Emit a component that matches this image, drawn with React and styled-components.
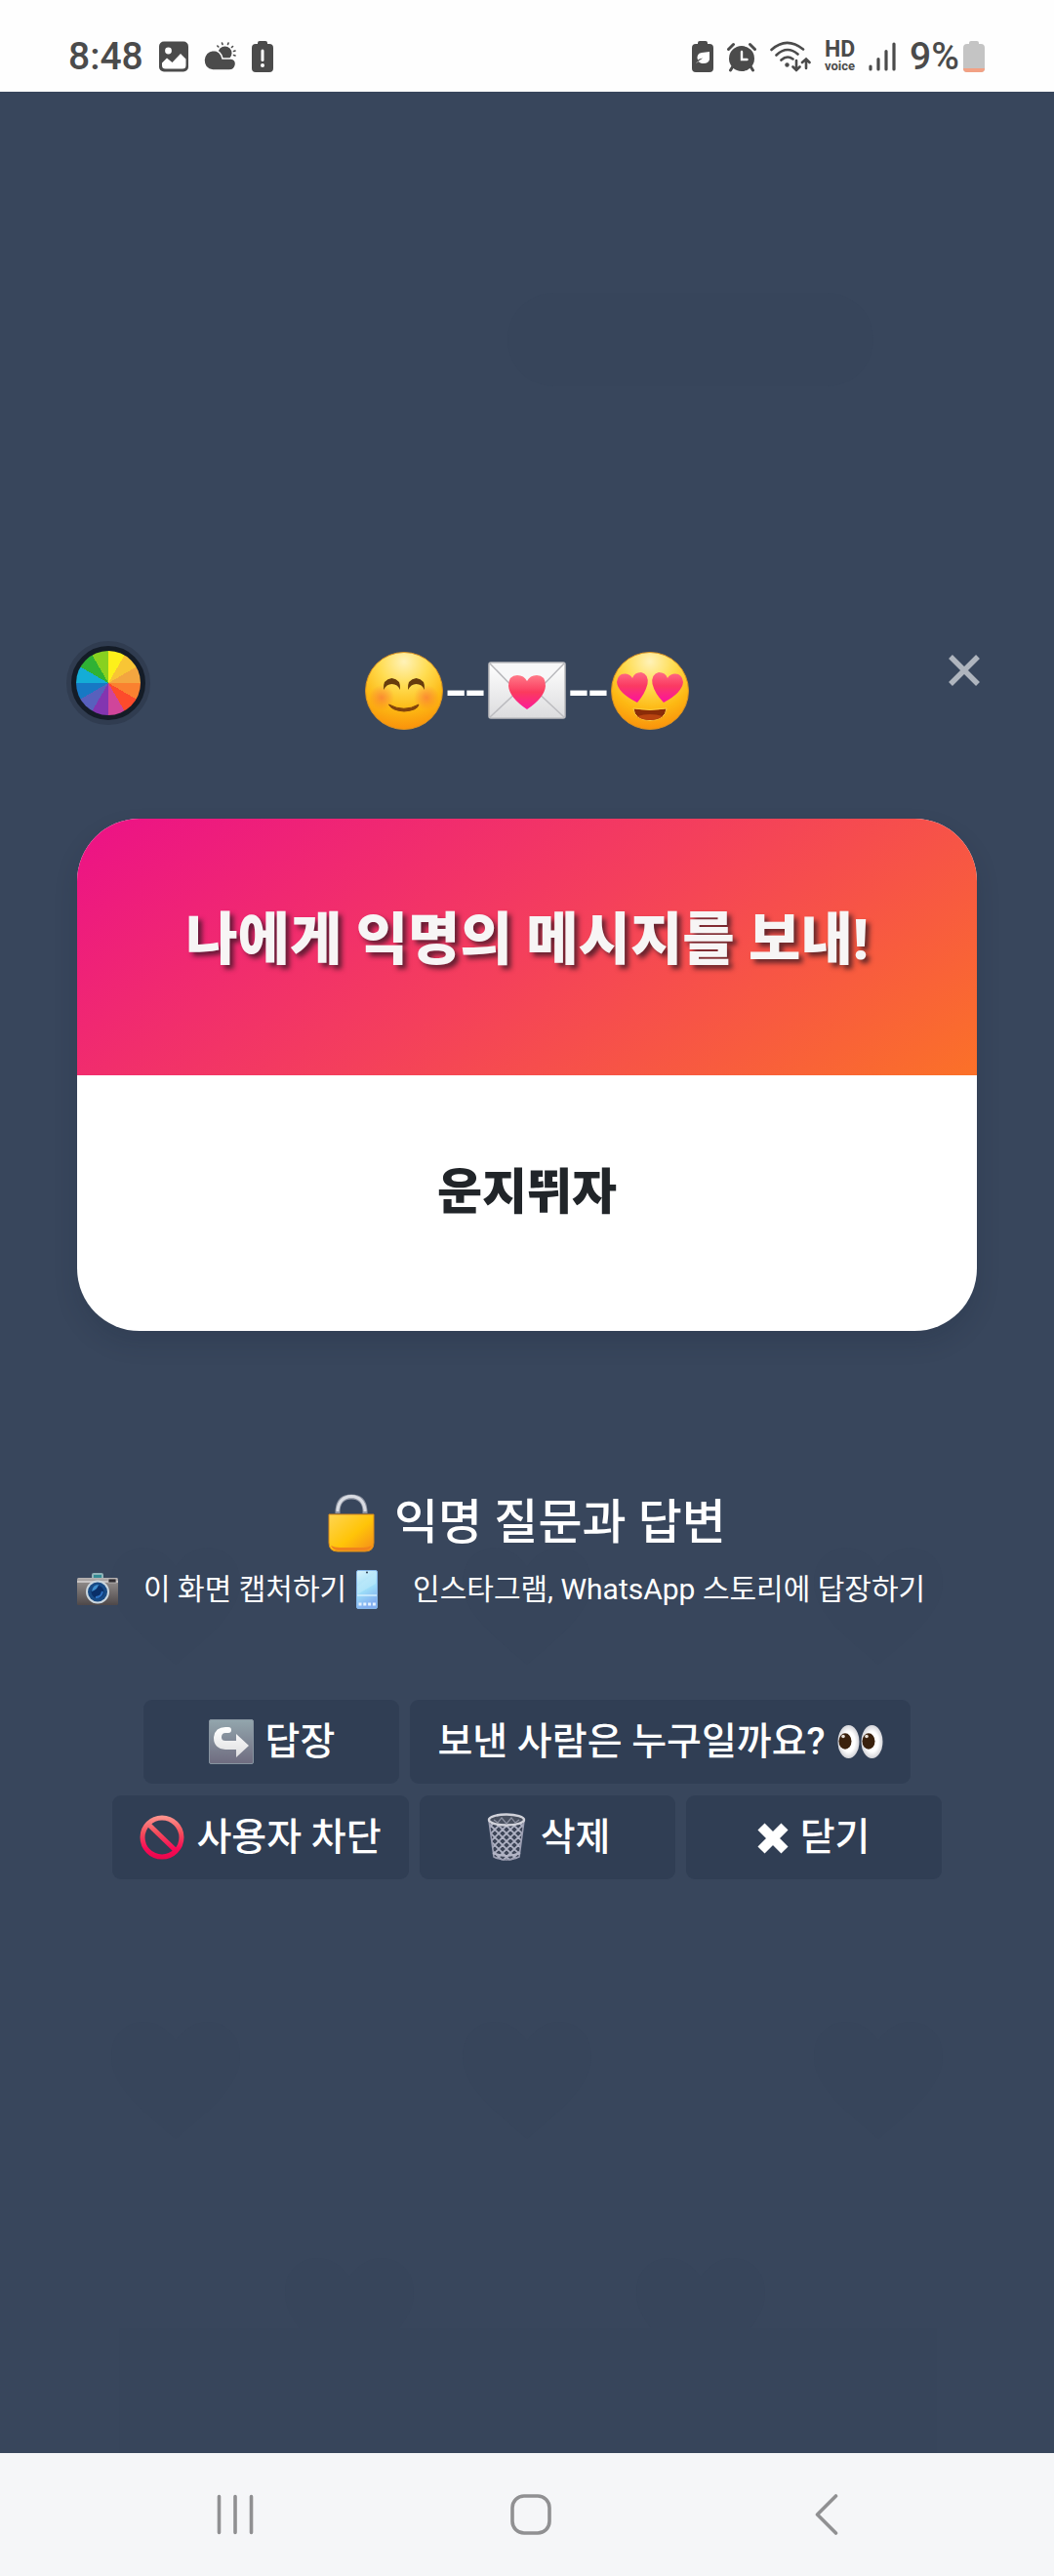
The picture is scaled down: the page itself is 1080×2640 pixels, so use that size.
import React from "react";
import styled, { createGlobalStyle } from "styled-components";

const GlobalStyle = createGlobalStyle`
  *, *::before, *::after { box-sizing: border-box; }
  body {
    margin: 0;
    background: #38465c;
    font-family: Roboto, "Noto Sans CJK KR", sans-serif;
  }
  button { font-family: inherit; cursor: pointer; }
  svg { display: block; flex: none; }
`;

const Screen = styled.div`
  display: flex;
  flex-direction: column;
  min-height: 100vh;
`;

const StatusBar = styled.header`
  display: flex;
  justify-content: space-between;
  height: 94px;
  padding: 22px 71px 0 70px;
  background: #fefefe;
  color: #4b4b4b;
`;

const StatusGroup = styled.div`
  display: flex;
  align-items: center;
  gap: ${(p) => p.$gap}px;
  height: 72px;
`;

const StatusText = styled.span`
  font-size: 39px;
  line-height: 40px;
  font-weight: 500;
`;

const BatteryLevel = styled.span`
  display: flex;
  align-items: center;
  gap: 4px;
`;

const VoiceBadge = styled.span`
  display: grid;
  justify-items: center;
  font-weight: 700;
`;

const VoiceLarge = styled.span`
  font-size: 23px;
  line-height: 18px;
`;

const VoiceSmall = styled.span`
  font-size: 13px;
  line-height: 15px;
`;

const Main = styled.main`
  position: relative;
  isolation: isolate;
  flex: 1;
  display: flex;
  flex-direction: column;
  justify-content: center;
  padding: 40px 68px 66px;
  background: #38465c;
  color: #fff;
`;

const Backdrop = styled.div`
  position: absolute;
  inset: 0;
  z-index: -1;
  overflow: hidden;
`;

const DialogHeader = styled.div`
  display: grid;
  grid-template-columns: 1fr auto 1fr;
  align-items: start;
`;

const ColorWheel = styled.button`
  width: 86px;
  height: 86px;
  padding: 0;
  border: 5px solid #303c50;
  border-radius: 50%;
  background: #141c27;
`;

const WheelFace = styled.span`
  display: block;
  width: 66px;
  height: 66px;
  margin: 5px;
  border-radius: 50%;
  background: conic-gradient(
    #fdf01a 0 30deg, #f8c535 30deg 60deg, #f3a640 60deg 90deg,
    #fa8130 90deg 120deg, #fd4b2b 120deg 150deg, #d0459a 150deg 180deg,
    #8335b0 180deg 210deg, #5860bd 210deg 240deg, #1779c4 240deg 270deg,
    #14add6 270deg 300deg, #2fb234 300deg 330deg, #88d120 330deg 360deg
  );
`;

const EmojiTitle = styled.div`
  display: flex;
  align-items: center;
  gap: 3px;
  height: 102px;
  font-size: 72px;
  line-height: 102px;
`;

const CloseButton = styled.button`
  display: grid;
  place-items: center;
  justify-self: end;
  width: 48px;
  height: 60px;
  padding: 0;
  border: 0;
  background: none;
  color: #afb5be;
`;

const Card = styled.article`
  margin: 80px 11px 0;
  border-radius: 64px;
  overflow: hidden;
  text-align: center;
  background: #fff;
  box-shadow: 0 12px 24px rgba(20, 30, 50, 0.16);
`;

const CardTitle = styled.h1`
  margin: 0;
  padding: 76px 32px 91px;
  font-size: 58px;
  line-height: 96px;
  font-weight: 900;
  color: #f7f5f5;
  text-shadow: 4px 4px 5px rgba(40, 20, 30, 0.7);
  background: linear-gradient(146deg, #ec1187, #f43f5c 50%, #fb7128);
`;

const CardMessage = styled.p`
  margin: 0;
  padding: 72px 32px 94px;
  font-size: 50px;
  line-height: 96px;
  font-weight: 900;
  color: #212529;
`;

const SectionTitle = styled.h2`
  display: flex;
  justify-content: center;
  align-items: center;
  gap: 20px;
  margin: 161px 0 0;
  font-size: 49px;
  line-height: 72px;
  font-weight: 500;
`;

const Hint = styled.p`
  display: flex;
  align-items: center;
  margin: 0 11px;
  font-size: 30px;
  line-height: 64px;
  white-space: nowrap;

  svg { margin-right: 26px; }
`;

const Actions = styled.div`
  display: grid;
  gap: 12px;
  margin-top: 81px;
`;

const ActionRow = styled.div`
  display: flex;
  justify-content: center;
  gap: 11px;
`;

const ActionButton = styled.button`
  display: flex;
  justify-content: center;
  align-items: center;
  gap: 12px;
  min-width: 262px;
  height: 86px;
  padding: 0 28px;
  border: 0;
  border-radius: 9px;
  background: #303e54;
  color: #fff;
  font-size: 39px;
  line-height: 48px;
  font-weight: 500;
  white-space: nowrap;
`;

const NavBar = styled.nav`
  display: grid;
  grid-template-columns: repeat(3, 1fr);
  height: 126px;
  padding: 0 82px 0 90px;
  background: #f5f6f8;
`;

const NavButton = styled.button`
  display: grid;
  place-items: center;
  border: 0;
  padding: 0;
  background: none;
  color: #909092;
`;

const HEART = "M0 60C-22 40-66 10-66-24C-66-48-50-60-32-60C-18-60-6-50 0-40C6-50 18-60 32-60C50-60 66-48 66-24C66 10 22 40 0 60Z";

function BackdropArt() {
  const hearts = [
    [180, 1552], [540, 1552], [900, 1552],
    [180, 2038], [540, 2038], [900, 2038],
    [358, 2280], [718, 2280],
  ];
  return (
    <Backdrop aria-hidden="true">
      <svg width="100%" height="100%" viewBox="0 0 1080 2420" preserveAspectRatio="xMidYMid slice" fill="#37455b">
        <rect x="520" y="206" width="375" height="96" rx="48" />
        {hearts.map(([x, y]) => (
          <path key={`${x}-${y}`} d={HEART} transform={`translate(${x} ${y})`} />
        ))}
        <rect x="122" y="2292" width="838" height="128" />
      </svg>
    </Backdrop>
  );
}

const ImageIcon = () => (
  <svg width="30" height="32" viewBox="0 0 30 32">
    <rect width="30" height="31" rx="5" y="0.5" fill="#4b4b4b" />
    <circle cx="9.5" cy="10" r="3.4" fill="#fff" />
    <path d="M3 22.5L8 17.5L13.5 22L22 13L27.500 18.500V25Q27.500 28.500 24 28.500H6.500Q3 28.500 3 25Z" fill="#fff" />
  </svg>
);

const WeatherIcon = () => (
  <svg width="33" height="30" viewBox="0 0 33 30" fill="#4b4b4b">
    <circle cx="21.500" cy="11.500" r="7" />
    <g stroke="#4b4b4b" strokeWidth="1.600" strokeLinecap="round">
      <path d="M19 2.500L18.500 1M24.500 2.500L25 1M14.800 5L13.800 4M28.500 5.500L29.500 4.500M30.500 9.500L32 9M30.500 13.500L32 14" />
    </g>
    <path d="M9 29Q0 28 0 18.500Q1 9.500 9.500 8.500Q17 8.500 19 17H28Q33 18 32.500 23Q31.500 29 26 29Z" stroke="#fefefe" strokeWidth="1.500" />
  </svg>
);

const BatteryBody = ({ children, fill = "#4b4b4b" }) => (
  <svg width="22" height="32" viewBox="0 0 22 32">
    <path d="M6 3V2Q6 0 8 0H14Q16 0 16 2V3H18Q22 3 22 7V28Q22 32 18 32H4Q0 32 0 28V7Q0 3 4 3Z" fill={fill} />
    {children}
  </svg>
);

const AlarmIcon = () => (
  <svg width="30" height="31" viewBox="0 0 30 31" fill="none" stroke="#4b4b4b" strokeLinecap="round">
    <circle cx="15" cy="17" r="13" fill="#4b4b4b" stroke="none" />
    <path d="M1.500 7.500L6.500 2.500M28.500 7.500L23.500 2.500M6 25L3.500 29M24 25L26.500 29" strokeWidth="3" />
    <path d="M15 10V18H20.500" stroke="#fff" strokeWidth="2.400" />
  </svg>
);

const WifiIcon = () => (
  <svg width="42" height="32" viewBox="0 0 42 32" fill="none" stroke="#4b4b4b" strokeWidth="2.600" strokeLinecap="round">
    <path d="M1.500 9Q17-5 34 8.500M6.500 14.500Q17.500 4 28.500 13.500M11.500 19.500Q17.500 14 23.500 18.500" />
    <circle cx="17.500" cy="24.500" r="2.200" fill="#4b4b4b" stroke="none" />
    <path d="M27 20V30M23.500 26.500L27 30L30.500 26.500M37 28V18.500M33 22L37 18.500L40.500 22" />
  </svg>
);

const SignalIcon = () => (
  <svg width="28" height="30" viewBox="0 0 28 30" stroke="#4b4b4b" strokeWidth="3.200" strokeLinecap="round">
    <path d="M2 25V28M10 17.500V28M18 9.500V28M26 2V28" />
  </svg>
);

const FaceGradient = ({ id }) => (
  <defs>
    <radialGradient id={id} cx="0.5" cy="0.12" r="0.92">
      <stop offset="0" stopColor="#fff2b8" />
      <stop offset="0.35" stopColor="#ffdc50" />
      <stop offset="0.68" stopColor="#fdb813" />
      <stop offset="1" stopColor="#f98c0a" />
    </radialGradient>
    <radialGradient id={`${id}Blush`}>
      <stop offset="0" stopColor="#f9703a" stopOpacity="0.65" />
      <stop offset="1" stopColor="#f9703a" stopOpacity="0" />
    </radialGradient>
    <linearGradient id={`${id}Heart`} x1="0" y1="0" x2="0" y2="1">
      <stop offset="0" stopColor="#ff6b84" />
      <stop offset="0.45" stopColor="#fb3a62" />
      <stop offset="1" stopColor="#fb12a0" />
    </linearGradient>
  </defs>
);

const SmileEmoji = () => (
  <svg width="80" height="80" viewBox="0 0 80 80" role="img" aria-label="미소">
    <FaceGradient id="smile" />
    <circle cx="40" cy="40" r="39.500" fill="url(#smile)" stroke="#d89123" strokeWidth="1" />
    <circle cx="17" cy="47" r="13" fill="url(#smileBlush)" />
    <circle cx="63" cy="47" r="13" fill="url(#smileBlush)" />
    <path d="M19 39Q18 28 27.500 27Q37 28 36 39Q33.500 33 27.500 33Q22 33 19 39ZM44 39Q43 28 52.500 27Q62 28 61 39Q58.500 33 52.500 33Q47 33 44 39Z" fill="#673c0d" />
    <path d="M24.500 54Q40 62.500 55 54Q54 60 40 61Q27 60 24.500 54Z" fill="#81420c" stroke="#81420c" strokeLinejoin="round" />
  </svg>
);

const LoveEmoji = () => (
  <svg width="80" height="80" viewBox="0 0 80 80" role="img" aria-label="하트 눈">
    <FaceGradient id="love" />
    <circle cx="40" cy="40" r="39.500" fill="url(#love)" stroke="#d89123" strokeWidth="1" />
    <path d="M27 52Q7 42 6 31Q7 22 15 22.500Q20 23 22 27Q24 21 31 21Q39 23 37.500 33Q35 43 27 52Z" fill="url(#loveHeart)" />
    <path d="M54 52Q45 43 42.500 33Q41 23 49 21Q56 21 58 27Q60 23 65 22.500Q73 22 74 31Q73 42 54 52Z" fill="url(#loveHeart)" />
    <path d="M23 58Q40 61 57 58Q56 70 40 70.500Q24 70 23 58Z" fill="#8b2c08" stroke="#ffd044" strokeWidth="1" />
    <path d="M27 66Q40 62 53 66Q49 70 40 70Q31 70 27 66Z" fill="#b8430f" />
  </svg>
);

const LetterEmoji = () => (
  <svg width="80" height="60" viewBox="0 0 80 60" role="img" aria-label="러브레터">
    <defs>
      <linearGradient id="paper" x1="0" y1="0" x2="0" y2="1">
        <stop offset="0" stopColor="#ffffff" />
        <stop offset="1" stopColor="#dcdcde" />
      </linearGradient>
      <linearGradient id="seal" x1="0" y1="0" x2="0" y2="1">
        <stop offset="0" stopColor="#ff7a88" />
        <stop offset="0.5" stopColor="#fb3a5e" />
        <stop offset="1" stopColor="#fb1a9a" />
      </linearGradient>
    </defs>
    <rect x="1" y="1" width="78" height="57" rx="2" fill="url(#paper)" stroke="#bdbdc0" strokeWidth="1.500" />
    <path d="M2 57L34 27M78 57L46 27" stroke="#bcbcc0" strokeWidth="1.500" />
    <path d="M2 2L35 36Q40 40 45 36L78 2" fill="#f7f7f8" stroke="#b8b8bc" strokeWidth="1.500" />
    <path d="M40 49Q22 37 21 25Q21 14 30 14Q37 14 40 20Q43 14 50 14Q59 14 59 25Q58 37 40 49Z" fill="url(#seal)" />
  </svg>
);

const LockEmoji = () => (
  <svg width="48" height="60" viewBox="0 0 48 60" role="img" aria-label="자물쇠">
    <defs>
      <linearGradient id="brass" x1="0" y1="0" x2="1" y2="1">
        <stop offset="0" stopColor="#ffd552" />
        <stop offset="0.55" stopColor="#ffc408" />
        <stop offset="1" stopColor="#f48a1c" />
      </linearGradient>
    </defs>
    <path d="M10 20V17Q11 3 24 3Q37 3 38 17V20" fill="none" stroke="#8f95a3" strokeWidth="5" />
    <path d="M10 18V16Q12 3 24 2.500Q36 3 38 16V18" fill="none" stroke="#d9dce3" strokeWidth="3" />
    <path d="M1 21H47V50Q47 59 38 59H10Q1 59 1 50Z" fill="url(#brass)" stroke="#d98a1a" />
    <path d="M3 53Q5 58 11 58H37Q43 58 45 53Q41 55 36 55H12Q7 55 3 53Z" fill="#f0831c" />
  </svg>
);

const CameraEmoji = () => (
  <svg width="42" height="36" viewBox="0 0 42 36" role="img" aria-label="카메라">
    <defs>
      <linearGradient id="body" x1="0" y1="0" x2="0" y2="1">
        <stop offset="0" stopColor="#b9b5b5" />
        <stop offset="0.2" stopColor="#8b8685" />
        <stop offset="1" stopColor="#4e4849" />
      </linearGradient>
    </defs>
    <path d="M15 6V3Q15 1 17 1H25Q27 1 27 3V6Z" fill="#8fb3b8" />
    <path d="M17 6V3H25V6Z" fill="#338b93" />
    <rect y="6" width="42" height="28" rx="1.500" fill="url(#body)" />
    <path d="M0 10H42" stroke="#d8d5d5" strokeWidth="1.500" />
    <rect x="32" y="7" width="8" height="4" fill="#302d31" stroke="#bcb8b8" strokeWidth="0.800" />
    <circle cx="21" cy="20.500" r="12" fill="#cbd7df" />
    <circle cx="21" cy="20.500" r="10" fill="#174a85" />
    <circle cx="21" cy="20.500" r="6.500" fill="#0a2f68" />
    <path d="M15 20Q16 13 22 13Q21 18 15 20Z" fill="#3f8fd0" />
    <path d="M19 26Q25 26 26 20" fill="none" stroke="#2c71c2" strokeWidth="2" />
  </svg>
);

const PhoneEmoji = () => (
  <svg width="42" height="40" viewBox="0 0 42 40" role="img" aria-label="휴대전화">
    <defs>
      <linearGradient id="glass" x1="0" y1="0" x2="0.3" y2="1">
        <stop offset="0" stopColor="#d8f3fb" />
        <stop offset="0.6" stopColor="#9bdcf8" />
        <stop offset="1" stopColor="#82aef0" />
      </linearGradient>
    </defs>
    <rect x="10.500" y="0.500" width="21" height="39" rx="1.500" fill="url(#glass)" stroke="#86b7e8" />
    <path d="M11 17L30 2V14L11 25Z" fill="#bceafa" opacity="0.6" />
    <path d="M11 26H31" stroke="#d3effe" strokeWidth="1.500" />
    <circle cx="21" cy="2.500" r="1" fill="#27394d" />
    <path d="M12.500 35H30" stroke="#e5f2ff" strokeWidth="3" strokeDasharray="3 1.800" />
  </svg>
);

const ReplyEmoji = () => (
  <svg width="46" height="46" viewBox="0 0 46 46" aria-hidden="true">
    <defs>
      <linearGradient id="tile" x1="0" y1="0" x2="0" y2="1">
        <stop offset="0" stopColor="#93a6ad" />
        <stop offset="1" stopColor="#6f6c80" />
      </linearGradient>
      <linearGradient id="arrow" x1="0" y1="0" x2="0" y2="1">
        <stop offset="0" stopColor="#ffffff" />
        <stop offset="1" stopColor="#dedee0" />
      </linearGradient>
    </defs>
    <rect x="0.500" y="0.500" width="45" height="45" rx="1.500" fill="url(#tile)" stroke="#8794a0" />
    <path d="M20 8Q23 8 23 11Q23 14 20 14H17Q13 14 13 18.500Q13 22 17 22H28V15L41 27L28 39V31H17Q5 30 5 19Q6 8 17 8Z" fill="url(#arrow)" />
  </svg>
);

const EyesEmoji = () => (
  <svg width="47" height="36" viewBox="0 0 47 36" aria-hidden="true">
    <defs>
      <radialGradient id="eyeball">
        <stop offset="0.6" stopColor="#ffffff" />
        <stop offset="1" stopColor="#d3d3d8" />
      </radialGradient>
    </defs>
    {[0, 24].map((x) => (
      <g key={x} transform={`translate(${x} 0)`}>
        <ellipse cx="11.500" cy="18" rx="11" ry="17" fill="url(#eyeball)" />
        <ellipse cx="8" cy="17.500" rx="6.500" ry="8.300" fill="#3a210d" />
        <circle cx="6" cy="12.500" r="1.800" fill="#e8e0d8" />
      </g>
    ))}
  </svg>
);

const BlockEmoji = () => (
  <svg width="46" height="46" viewBox="0 0 46 46" fill="none" aria-hidden="true">
    <defs>
      <linearGradient id="ban" gradientUnits="userSpaceOnUse" x1="0" y1="0" x2="0" y2="46">
        <stop offset="0" stopColor="#ff9a92" />
        <stop offset="0.4" stopColor="#f44d5b" />
        <stop offset="0.75" stopColor="#f80a56" />
        <stop offset="1" stopColor="#e8074a" />
      </linearGradient>
    </defs>
    <circle cx="23" cy="23" r="20" stroke="url(#ban)" strokeWidth="5" />
    <path d="M8.500 9L37.500 37" stroke="url(#ban)" strokeWidth="5" />
  </svg>
);

const TrashEmoji = () => (
  <svg width="46" height="50" viewBox="0 0 46 50" fill="none" aria-hidden="true">
    <defs>
      <clipPath id="basket">
        <path d="M5 7H41L36 46Q23 52 10 46Z" />
      </clipPath>
    </defs>
    <g clipPath="url(#basket)">
      <rect width="46" height="50" fill="#3d4557" />
      <path
        d="M-38 0L12 50M-30 0L20 50M-22 0L28 50M-14 0L36 50M-6 0L44 50M2 0L52 50M10 0L60 50M18 0L68 50M26 0L76 50M34 0L84 50M84 0L34 50M76 0L26 50M68 0L18 50M60 0L10 50M52 0L2 50M44 0L-6 50M36 0L-14 50M28 0L-22 50M20 0L-30 50M12 0L-38 50"
        stroke="#b0b3c4" strokeWidth="1.800"
      />
    </g>
    <path d="M5 8L10 45Q23 51 36 45L41 8" stroke="#9b9eb2" strokeWidth="1.600" />
    <path d="M9 41Q23 47 37 41" stroke="#b3b5c6" strokeWidth="2" />
    <ellipse cx="23" cy="7" rx="18" ry="5.500" fill="#49505f" stroke="#d0d1d9" strokeWidth="2.500" />
    <path d="M10 7L14 10L18 5L23 11L28 5L32 10L36 7" stroke="#8e92a2" strokeWidth="1.200" />
  </svg>
);

const HeavyCross = () => (
  <svg width="32" height="34" viewBox="0 0 32 34" aria-hidden="true">
    <path d="M4 6L28 30M28 6L4 30" stroke="#fff" strokeWidth="10" />
  </svg>
);

export default function App() {
  return (
    <Screen>
      <GlobalStyle />
      <StatusBar>
        <StatusGroup $gap={16}>
          <StatusText>8:48</StatusText>
          <ImageIcon />
          <WeatherIcon />
          <BatteryBody>
            <path d="M11 10V19.500" stroke="#fff" strokeWidth="3" strokeLinecap="round" />
            <circle cx="11" cy="25" r="2" fill="#fff" />
          </BatteryBody>
        </StatusGroup>
        <StatusGroup $gap={14}>
          <BatteryBody>
            <path d="M18 11V19Q17 23 12 23Q8 23 7 21Q4 23 4 22.500Q9 19 11 17.500Q8 18 6 19.500Q4 13 10 12Z" fill="#fff" />
          </BatteryBody>
          <AlarmIcon />
          <WifiIcon />
          <VoiceBadge>
            <VoiceLarge>HD</VoiceLarge>
            <VoiceSmall>voice</VoiceSmall>
          </VoiceBadge>
          <SignalIcon />
          <BatteryLevel>
            <StatusText>9%</StatusText>
            <BatteryBody fill="#c4c4c4">
              <path d="M0 28H22Q22 32 18 32H4Q0 32 0 28Z" fill="#f2a184" />
            </BatteryBody>
          </BatteryLevel>
        </StatusGroup>
      </StatusBar>

      <Main>
        <BackdropArt />
        <DialogHeader>
          <ColorWheel type="button" aria-label="색상 변경">
            <WheelFace />
          </ColorWheel>
          <EmojiTitle>
            <SmileEmoji />
            <span>--</span>
            <LetterEmoji />
            <span>--</span>
            <LoveEmoji />
          </EmojiTitle>
          <CloseButton type="button" aria-label="닫기">
            <svg width="32" height="32" viewBox="0 0 32 32" stroke="currentColor" strokeWidth="5.500">
              <path d="M2 2L30 30M30 2L2 30" />
            </svg>
          </CloseButton>
        </DialogHeader>

        <Card>
          <CardTitle>나에게 익명의 메시지를 보내!</CardTitle>
          <CardMessage>운지뛰자</CardMessage>
        </Card>

        <SectionTitle>
          <LockEmoji />
          익명 질문과 답변
        </SectionTitle>
        <Hint>
          <CameraEmoji />
          <span>이 화면 캡처하기</span>
          <PhoneEmoji />
          <span>인스타그램, WhatsApp 스토리에 답장하기</span>
        </Hint>

        <Actions>
          <ActionRow>
            <ActionButton type="button"><ReplyEmoji />답장</ActionButton>
            <ActionButton type="button">보낸 사람은 누구일까요?<EyesEmoji /></ActionButton>
          </ActionRow>
          <ActionRow>
            <ActionButton type="button"><BlockEmoji />사용자 차단</ActionButton>
            <ActionButton type="button"><TrashEmoji />삭제</ActionButton>
            <ActionButton type="button"><HeavyCross />닫기</ActionButton>
          </ActionRow>
        </Actions>
      </Main>

      <NavBar aria-label="시스템 탐색">
        <NavButton type="button" aria-label="최근 앱">
          <svg width="38" height="42" viewBox="0 0 38 42" stroke="currentColor" strokeWidth="3.600" strokeLinecap="round">
            <path d="M2.500 2.500V39.500M19 2.500V39.500M35.500 2.500V39.500" />
          </svg>
        </NavButton>
        <NavButton type="button" aria-label="홈">
          <svg width="42" height="42" viewBox="0 0 42 42" fill="none" stroke="currentColor" strokeWidth="3.600">
            <rect x="2" y="2" width="38" height="38" rx="12" />
          </svg>
        </NavButton>
        <NavButton type="button" aria-label="뒤로">
          <svg width="24" height="42" viewBox="0 0 24 42" fill="none" stroke="currentColor" strokeWidth="3.600" strokeLinecap="round" strokeLinejoin="round">
            <path d="M21.500 2L2.500 21L21.500 40" />
          </svg>
        </NavButton>
      </NavBar>
    </Screen>
  );
}
